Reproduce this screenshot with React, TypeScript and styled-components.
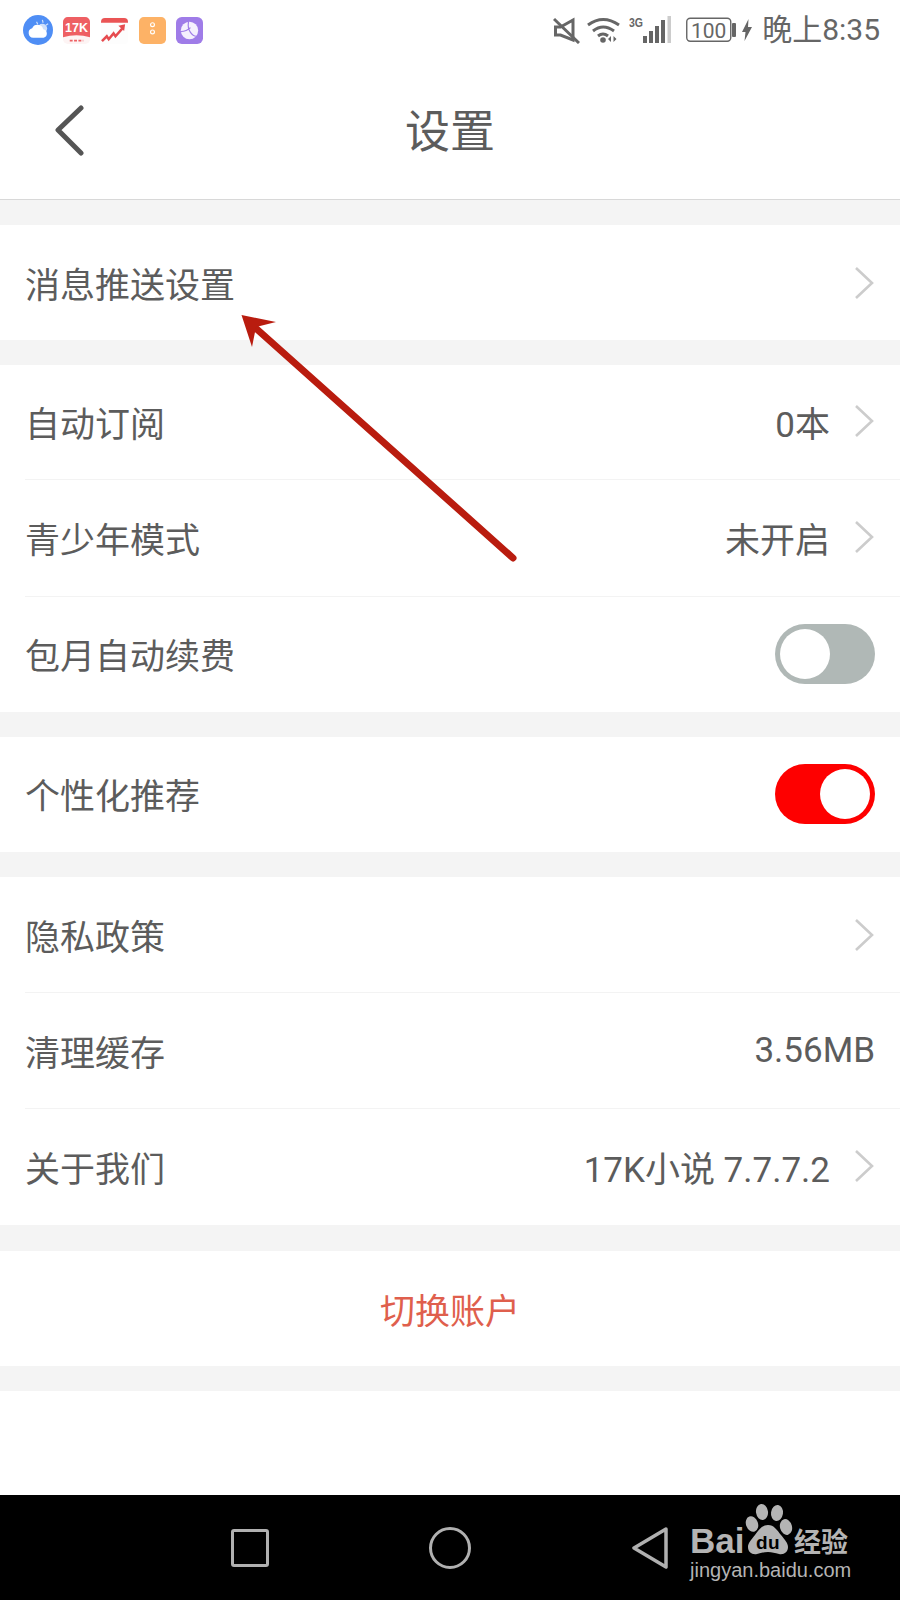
import styled, { createGlobalStyle } from "styled-components";

const GlobalStyle = createGlobalStyle`
  html, body {
    margin: 0;
    padding: 0;
    background: #fff;
  }
  body {
    font-family: "Liberation Sans", "Noto Sans CJK SC", sans-serif;
  }
`;

const Page = styled.div`
  position: relative;
  width: 900px;
  height: 1600px;
  display: flex;
  flex-direction: column;
  background: #fff;
  overflow: hidden;
`;

const StatusBar = styled.div`
  height: 60px;
  display: flex;
  align-items: center;
  justify-content: space-between;
  padding: 0 20px 0 23px;
  color: #666;
`;

const AppIcons = styled.div`
  display: flex;
  align-items: center;
`;

const SystemIcons = styled.div`
  display: flex;
  align-items: center;
`;

const Icon = styled.svg<{ $ml?: number }>`
  display: block;
  flex: none;
  margin-left: ${(p) => p.$ml ?? 0}px;
`;

const Clock = styled.span`
  font-family: "Roboto", "Noto Sans CJK SC", sans-serif;
  font-size: 30px;
  line-height: 60px;
  color: #666;
  margin-left: 10px;
`;

const Header = styled.header`
  height: 140px;
  display: flex;
  align-items: center;
  justify-content: center;
  position: relative;
  border-bottom: 1px solid #d8d8d8;
  box-sizing: border-box;
  padding-bottom: 3px;
`;

const BackButton = styled.button`
  position: absolute;
  left: 54px;
  top: 45px;
  padding: 0;
  border: 0;
  background: none;
  display: flex;
`;

const Title = styled.h1`
  margin: 0;
  font-family: "Noto Sans CJK SC", sans-serif;
  font-size: 45px;
  font-weight: 400;
  color: #5c5c5c;
`;

const Content = styled.main`
  flex: 1;
  display: flex;
  flex-direction: column;
`;

const Gap = styled.div<{ $h?: number }>`
  height: ${(p) => p.$h ?? 25}px;
  background: #f4f4f4;
`;

const Row = styled.div<{ $h: number; $line?: boolean; $lift?: boolean }>`
  height: ${(p) => p.$h}px;
  box-sizing: border-box;
  display: flex;
  align-items: center;
  margin-left: 25px;
  padding-right: 25px;
  padding-bottom: ${(p) => (p.$lift ? 2 : 0)}px;
  border-bottom: ${(p) => (p.$line ? "1px solid #f3f3f3" : "0")};
`;

const Label = styled.span`
  flex: 1;
  font-family: "Noto Sans CJK SC", sans-serif;
  font-size: 35px;
  color: #5c5c5c;
`;

const Value = styled.span`
  font-family: "Roboto", "Noto Sans CJK SC", sans-serif;
  font-size: 35px;
  color: #5c5c5c;
`;

const Chevron = styled.svg`
  width: 21px;
  height: 34px;
  margin-left: 24px;
  flex: none;
`;

const Switch = styled.div<{ $on?: boolean }>`
  width: 100px;
  height: 60px;
  border-radius: 30px;
  background: ${(p) => (p.$on ? "#fe0000" : "#b0b8b6")};
  display: flex;
  align-items: center;
  justify-content: ${(p) => (p.$on ? "flex-end" : "flex-start")};
  padding: 0 5px;
  box-sizing: border-box;
`;

const Knob = styled.div`
  width: 50px;
  height: 50px;
  border-radius: 50%;
  background: #fff;
`;

const SwitchAccount = styled.div`
  height: 115px;
  display: flex;
  align-items: center;
  justify-content: center;
  font-family: "Noto Sans CJK SC", sans-serif;
  font-size: 35px;
  color: #df5f4d;
`;

const NavBar = styled.nav`
  position: relative;
  height: 105px;
  background: #000;
  flex: none;
  display: flex;
  align-items: center;
  padding-left: 231px;
  box-sizing: border-box;
`;

const NavSquare = styled.div`
  width: 38px;
  height: 38px;
  box-sizing: border-box;
  border: 3.5px solid #b0b0b0;
  border-radius: 3px;
  margin-right: 160px;
`;

const NavCircle = styled.div`
  width: 42px;
  height: 42px;
  box-sizing: border-box;
  border: 3.5px solid #b0b0b0;
  border-radius: 50%;
  margin-right: 161px;
`;

const Watermark = styled.div`
  position: absolute;
  left: 690px;
  top: 8px;
  width: 180px;
  height: 92px;
  color: #b4b4b4;
`;

const PawLogo = styled.svg`
  position: absolute;
  left: 0;
  top: 0;
`;

const BaiText = styled.span`
  position: absolute;
  left: 0;
  top: 20px;
  font-family: "Liberation Sans", sans-serif;
  font-weight: 700;
  font-size: 35px;
  line-height: 35px;
`;

const DuText = styled.span`
  position: absolute;
  left: 62px;
  top: 29px;
  width: 32px;
  text-align: center;
  font-family: "Liberation Sans", sans-serif;
  font-weight: 700;
  font-size: 19px;
  line-height: 22px;
  letter-spacing: 0.5px;
  color: #000;
`;

const JingYan = styled.span`
  position: absolute;
  left: 104px;
  top: 21px;
  font-family: "Noto Sans CJK SC", sans-serif;
  font-weight: 700;
  font-size: 27px;
  line-height: 34px;
`;

const Domain = styled.span`
  position: absolute;
  left: 0;
  top: 54px;
  font-family: "Liberation Sans", sans-serif;
  font-size: 20px;
  line-height: 26px;
`;

const Annotation = styled.svg`
  position: absolute;
  left: 0;
  top: 0;
  pointer-events: none;
`;

const ChevronIcon = () => (
  <Chevron viewBox="0 0 21 34" fill="none" stroke="#cccccc" strokeWidth="2.6">
    <path d="M2 2 L18 17 L2 32" />
  </Chevron>
);

const appIcons = (
  <>
    <Icon width="30" height="30" viewBox="0 0 31 31">
      <circle cx="15.5" cy="15.5" r="15.5" fill="#4f8ef5" />
      <path d="M20 5 l.8 3 M26 9 l-2.5 1.5 M14 7l1.2 2.5" stroke="#cfe0fb" strokeWidth="1.2" />
      <circle cx="20" cy="14" r="5" fill="#cfe0fb" />
      <path d="M10.5 23.5a5 5 0 0 1-1-9.8 6 6 0 0 1 11.3 1 4.5 4.5 0 0 1 .5 8.8z" fill="#fff" />
    </Icon>
    <Icon $ml={10} width="27" height="27" viewBox="0 0 28 28">
      <rect width="28" height="28" rx="5" fill="#fdf4f4" />
      <path d="M0 5a5 5 0 0 1 5-5h18a5 5 0 0 1 5 5v16q-14-4-28 0z" fill="#ee5f63" />
      <text x="14" y="16" textAnchor="middle" fontFamily="Liberation Sans, sans-serif" fontSize="13" fontWeight="700" fill="#fff">17K</text>
      <path d="M7 24.5h14" stroke="#ee5f63" strokeWidth="2" strokeDasharray="3 1.5" />
    </Icon>
    <Icon $ml={11} width="27" height="27" viewBox="0 0 28 28">
      <rect width="28" height="28" rx="4" fill="#fdfdfd" />
      <path d="M0 5a4 4 0 0 1 4-4h20a4 4 0 0 1 4 4v1H0z" fill="#ea5455" />
      <path d="M1 25 l5-5 2 3 5-6 2 3 7-8" fill="none" stroke="#e64b4f" strokeWidth="2.6" />
      <path d="M18 9 l7-1.5-1 7z" fill="#e64b4f" />
    </Icon>
    <Icon $ml={11} width="27" height="27" viewBox="0 0 28 28">
      <rect width="28" height="28" rx="5" fill="#fdb266" />
      <circle cx="14" cy="8" r="2" fill="none" stroke="#fff" strokeWidth="1.2" />
      <circle cx="14" cy="15.5" r="2" fill="none" stroke="#fff" strokeWidth="1.2" />
    </Icon>
    <Icon $ml={10} width="27" height="27" viewBox="0 0 28 28">
      <rect width="28" height="28" rx="6" fill="#9f7ce8" />
      <circle cx="14" cy="14" r="9" fill="#f5f0fd" />
      <path d="M13 5c-1 5 0 8 2 11s4 4 6 4 M5 15c4 0 7-1 10-4" fill="none" stroke="#9f7ce8" strokeWidth="1.2" />
    </Icon>
  </>
);

const systemIcons = (
  <>
    <Icon width="27" height="27" viewBox="0 0 27 27" fill="none" stroke="#666" strokeWidth="3">
      <path d="M2.5 10h5L20 3v20L7.5 18h-5z" />
      <path d="M1 2 L26 26" />
    </Icon>
    <Icon $ml={7} width="33" height="27" viewBox="0 0 33 27" fill="none" stroke="#666" strokeWidth="3">
      <path d="M1 8 Q16-3 32 8" />
      <path d="M6 14 Q16 6 27 14" />
      <path d="M11 19 Q16 15 21 19" />
      <circle cx="16" cy="23" r="2.8" fill="#666" stroke="none" />
      <path d="M24 19v6l-3-3zM26.5 25v-6l3 3z" fill="#666" stroke="none" />
    </Icon>
    <Icon $ml={9} width="43" height="30" viewBox="0 0 43 30" fill="#666">
      <text x="0" y="12" fontFamily="Liberation Sans, sans-serif" fontSize="13" fontWeight="700" textLength="14" lengthAdjust="spacingAndGlyphs">3G</text>
      <rect x="14" y="21" width="4" height="7" />
      <rect x="20" y="16" width="4" height="12" />
      <rect x="26" y="11" width="4" height="17" />
      <rect x="32" y="5" width="4" height="23" />
      <rect x="38.5" y="1" width="3.5" height="27" fill="#ccc" />
    </Icon>
    <Icon $ml={14} width="50" height="26" viewBox="0 0 50 26">
      <rect x=".75" y="1.25" width="44" height="23" rx="3.5" fill="none" stroke="#666" strokeWidth="1.4" />
      <text x="22.7" y="20.5" textAnchor="middle" fontFamily="Roboto, sans-serif" fontSize="21" fill="#666">100</text>
      <rect x="46" y="6" width="4" height="14" rx="1" fill="#666" />
    </Icon>
    <Icon $ml={6} width="10" height="22" viewBox="0 0 10 22" fill="#666">
      <path d="M6.5 0 L0 13h3.5l-1 9L10 8H6z" />
    </Icon>
  </>
);

function App() {
  return (
    <Page>
      <GlobalStyle />
      <StatusBar>
        <AppIcons>{appIcons}</AppIcons>
        <SystemIcons>
          {systemIcons}
          <Clock>晚上8:35</Clock>
        </SystemIcons>
      </StatusBar>
      <Header>
        <BackButton>
          <svg width="32" height="52" viewBox="0 0 32 52" fill="none" stroke="#555" strokeWidth="5" strokeLinecap="round" strokeLinejoin="round">
            <path d="M27 3 L4 25 L27 48" />
          </svg>
        </BackButton>
        <Title>设置</Title>
      </Header>
      <Content>
        <Gap />
        <Row $h={115}>
          <Label>消息推送设置</Label>
          <ChevronIcon />
        </Row>
        <Gap />
        <Row $h={115} $line $lift>
          <Label>自动订阅</Label>
          <Value>0本</Value>
          <ChevronIcon />
        </Row>
        <Row $h={117} $line $lift>
          <Label>青少年模式</Label>
          <Value>未开启</Value>
          <ChevronIcon />
        </Row>
        <Row $h={115} $lift>
          <Label>包月自动续费</Label>
          <Switch>
            <Knob />
          </Switch>
        </Row>
        <Gap />
        <Row $h={115} $lift>
          <Label>个性化推荐</Label>
          <Switch $on>
            <Knob />
          </Switch>
        </Row>
        <Gap />
        <Row $h={116} $line>
          <Label>隐私政策</Label>
          <ChevronIcon />
        </Row>
        <Row $h={116} $line>
          <Label>清理缓存</Label>
          <Value>3.56MB</Value>
        </Row>
        <Row $h={116} $lift>
          <Label>关于我们</Label>
          <Value>17K小说 7.7.7.2</Value>
          <ChevronIcon />
        </Row>
        <Gap $h={26} />
        <SwitchAccount>切换账户</SwitchAccount>
        <Gap />
      </Content>
      <NavBar>
        <NavSquare />
        <NavCircle />
        <svg width="36" height="42" viewBox="0 0 36 42" fill="none" stroke="#b0b0b0" strokeWidth="3.5" strokeLinejoin="round">
          <path d="M34 2 L2 21 L34 40 Z" />
        </svg>
        <Watermark>
          <BaiText>Bai</BaiText>
          <PawLogo width="110" height="60" viewBox="0 0 110 60" fill="#b4b4b4">
            <ellipse cx="62" cy="21" rx="6" ry="8" transform="rotate(-20 62 21)" />
            <ellipse cx="72" cy="9" rx="6" ry="8" transform="rotate(-8 72 9)" />
            <ellipse cx="87" cy="10" rx="6" ry="8" transform="rotate(8 87 10)" />
            <ellipse cx="96" cy="24" rx="6" ry="8" transform="rotate(-15 96 24)" />
            <path d="M78 22c6 0 9 5 13 10s7 8 7 12c0 5-4 8-9 7-4-1-7-2-11-2s-7 1-11 2c-5 1-9-2-9-7 0-4 3-7 7-12s7-10 13-10z" />
          </PawLogo>
          <DuText>du</DuText>
          <JingYan>经验</JingYan>
          <Domain>jingyan.baidu.com</Domain>
        </Watermark>
      </NavBar>
      <Annotation width="900" height="1600" viewBox="0 0 900 1600">
        <path d="M513 558 L250 323" stroke="#b91c0f" strokeWidth="7" strokeLinecap="round" />
        <path d="M241.5 315 L276 322 L256 327 L252 347 Z" fill="#b91c0f" />
      </Annotation>
    </Page>
  );
}

export default App;
